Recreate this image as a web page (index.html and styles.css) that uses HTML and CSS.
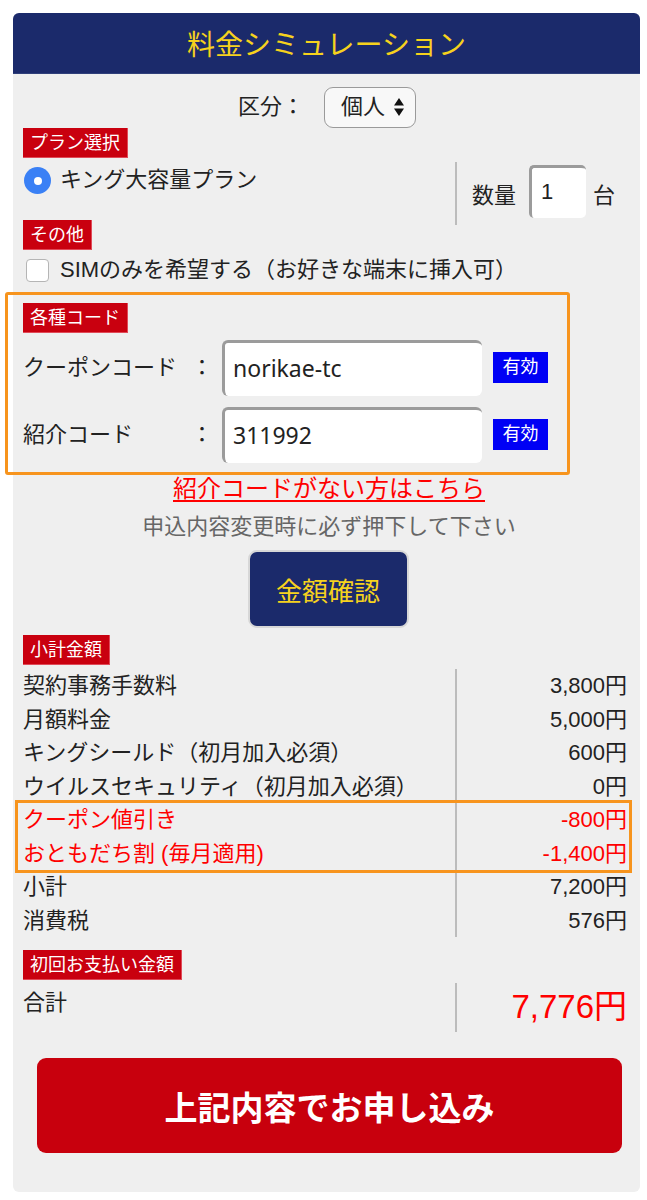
FILE: index.html
```html
<!DOCTYPE html>
<html lang="ja">
<head>
<meta charset="utf-8">
<title>料金シミュレーション</title>
<link rel="stylesheet" href="styles.css">
</head>
<body>
<div class="card">
  <div class="head">料金シミュレーション</div>
  <div class="body">
    <div class="kubun">
      <span class="kubun-label">区分：</span>
      <div class="select">
        <span>個人</span>
        <svg class="arrows" width="12" height="20" viewBox="0 0 12 20"><path d="M6 1 L11 8.5 L1 8.5 Z M6 19 L11 11.5 L1 11.5 Z" fill="#111"/></svg>
      </div>
    </div>

    <div class="tag tag-plan">プラン選択</div>
    <div class="plan">
      <div class="plan-left">
        <span class="radio"></span>
        <span>キング大容量プラン</span>
      </div>
      <div class="plan-right">
        <span>数量</span>
        <div class="qty">1</div>
        <span>台</span>
      </div>
    </div>

    <div class="tag">その他</div>
    <div class="check-row">
      <span class="check"></span>
      <span>SIMのみを希望する（お好きな端末に挿入可）</span>
    </div>

    <div class="codes">
      <div class="tag">各種コード</div>
      <div class="code-row first">
        <div class="code-label"><span>クーポンコード</span><span>：</span></div>
        <div class="code-input">norikae-tc</div>
        <div class="valid">有効</div>
      </div>
      <div class="code-row">
        <div class="code-label"><span>紹介コード</span><span>：</span></div>
        <div class="code-input">311992</div>
        <div class="valid">有効</div>
      </div>
    </div>

    <div class="link-row"><a class="link" href="#">紹介コードがない方はこちら</a></div>
    <div class="note">申込内容変更時に必ず押下して下さい</div>
    <div class="confirm-row"><div class="confirm">金額確認</div></div>

    <div class="tag tag-sub">小計金額</div>
    <div class="rows">
      <div class="row"><div class="rl">契約事務手数料</div><div class="rv">3,800円</div></div>
      <div class="row"><div class="rl">月額料金</div><div class="rv">5,000円</div></div>
      <div class="row"><div class="rl">キングシールド（初月加入必須）</div><div class="rv">600円</div></div>
      <div class="row"><div class="rl">ウイルスセキュリティ（初月加入必須）</div><div class="rv">0円</div></div>
      <div class="hl">
        <div class="row red"><div class="rl">クーポン値引き</div><div class="rv">-800円</div></div>
        <div class="row red"><div class="rl">おともだち割 (毎月適用)</div><div class="rv">-1,400円</div></div>
      </div>
      <div class="row"><div class="rl">小計</div><div class="rv">7,200円</div></div>
      <div class="row"><div class="rl">消費税</div><div class="rv">576円</div></div>
    </div>

    <div class="tag tag-total">初回お支払い金額</div>
    <div class="total">
      <div class="tl">合計</div>
      <div class="tv">7,776円</div>
    </div>

    <div class="apply">上記内容でお申し込み</div>
  </div>
</div>
</body>
</html>
```

FILE: styles.css
```css
* { box-sizing: border-box; }
html, body { margin: 0; padding: 0; background: #fff; }
body {
  font-family: "Liberation Sans", "Noto Sans CJK JP", sans-serif;
  font-size: 22px;
  color: #222;
}
.card {
  margin: 13px 7px 8px 13px;
  width: 627px;
  background: #efefef;
  border-radius: 6px;
  padding-bottom: 39px;
}
.head {
  height: 61px;
  background: #1b2a6b;
  border-radius: 6px 6px 0 0;
  color: #f6d21d;
  font-size: 28px;
  display: flex;
  align-items: center;
  justify-content: center;
  border-bottom: 1px solid #2f3f7a;
}
.body { padding: 0 13px 0 10px; }

.kubun {
  margin-top: 13px;
  display: flex;
  justify-content: center;
  align-items: center;
  gap: 20px;
  height: 40px;
  padding-left: 4px;
}
.kubun-label { line-height: 30px; }
.select {
  width: 92px;
  height: 41px;
  border: 1px solid #9a9a9a;
  border-radius: 9px;
  background: #f8f8f8;
  display: flex;
  align-items: center;
  padding-left: 16px;
  gap: 8px;
  line-height: 30px;
}
.arrows { display: block; }

.tag {
  display: inline-block;
  background: #c9000f;
  color: #fff;
  font-size: 18px;
  line-height: 30px;
  height: 30px;
  padding: 0 7px;
  border-right: 1px solid #e04a58;
  border-bottom: 1px solid #e04a58;
}
.tag-plan { margin-top: 1px; }

.plan {
  display: flex;
  height: 62px;
}
.plan-left {
  flex: 0 0 432px;
  display: flex;
  align-items: flex-start;
  padding-top: 7px;
  padding-left: 1px;
  gap: 9px;
  line-height: 30px;
}
.radio {
  flex: none;
  width: 27px;
  height: 27px;
  margin-top: 2px;
  border-radius: 50%;
  background: #3a80f5;
  display: flex;
  align-items: center;
  justify-content: center;
}
.radio::after {
  content: "";
  width: 8px;
  height: 8px;
  border-radius: 50%;
  background: #fff;
}
.plan-right {
  flex: 1;
  margin-top: 4px;
  margin-bottom: -5px;
  border-left: 2px solid #bcbcbc;
  display: flex;
  align-items: center;
  padding-left: 15px;
  line-height: 30px;
  position: relative;
}
.plan-right > span:first-child { margin-right: 13px; margin-top: 4px; }
.plan-right > span:last-child { margin-left: 7px; margin-top: 4px; }
.qty {
  width: 57px;
  height: 53px;
  background: #fff;
  border-top: 3px solid #9b9b9b;
  border-left: 3px solid #9b9b9b;
  border-radius: 5px;
  padding-left: 9px;
  line-height: 48px;
  margin-top: -4px;
}

.check-row {
  display: flex;
  align-items: flex-start;
  padding-top: 5px;
  padding-left: 3px;
  gap: 11px;
  line-height: 30px;
  height: 42px;
}
.check {
  flex: none;
  width: 23px;
  height: 23px;
  margin-top: 4px;
  background: #fff;
  border: 1px solid #b5b5b5;
  border-radius: 4px;
}

.codes {
  margin-left: -18px;
  width: 565px;
  height: 183px;
  border: 3px solid #f7941d;
  border-radius: 3px;
  padding: 8px 0 0 15px;
}
.code-row {
  display: flex;
  align-items: center;
  margin-top: 11px;
}
.code-row.first { margin-top: 7px; }
.code-label {
  width: 190px;
  display: flex;
  justify-content: space-between;
  line-height: 30px;
}
.code-input {
  margin-left: 9px;
  width: 260px;
  height: 56px;
  background: #fff;
  border-top: 3px solid #9b9b9b;
  border-left: 3px solid #9b9b9b;
  border-radius: 6px;
  padding-left: 8px;
  font-size: 23px;
  line-height: 51px;
  font-family: "Noto Sans", "Liberation Sans", sans-serif;
}
.valid {
  margin-left: 11px;
  width: 55px;
  height: 31px;
  background: #0000f5;
  color: #fff;
  font-size: 18px;
  line-height: 31px;
  text-align: center;
  margin-top: -2px;
}

.link-row {
  text-align: center;
  line-height: 28px;
  height: 28px;
  padding-left: 8px;
}
.link {
  color: #ff0000;
  font-size: 24px;
  text-decoration: underline;
  text-underline-offset: 3px;
}
.note {
  margin-top: 9px;
  text-align: center;
  color: #666;
  line-height: 30px;
  padding-left: 8px;
}
.confirm-row {
  margin-top: 8px;
  display: flex;
  justify-content: center;
  padding-left: 6px;
}
.confirm {
  width: 161px;
  height: 78px;
  background: #1b2a6b;
  border: 2px solid #d7d7d7;
  border-radius: 9px;
  color: #f6d21d;
  font-size: 26px;
  display: flex;
  align-items: center;
  justify-content: center;
}
.tag-sub { margin-top: 7px; }

.rows { margin-top: 4px; }
.row {
  display: flex;
  line-height: 33.5px;
  height: 33.5px;
}
.rl { flex: 0 0 432px; white-space: nowrap; }
.rv {
  flex: 1;
  border-left: 2px solid #bcbcbc;
  text-align: right;
}
.row.red { color: #ff0000; }
.hl {
  outline: 3px solid #f7941d;
  margin-left: -5px;
  padding-left: 5px;
  margin-right: -2px;
  padding-right: 2px;
}
.hl .rv { margin-right: -2px; padding-right: 2px; }

.tag-total { margin-top: 13px; }
.total {
  margin-top: 3px;
  display: flex;
  height: 49px;
}
.tl { flex: 0 0 432px; line-height: 40px; }
.tv {
  flex: 1;
  border-left: 2px solid #bcbcbc;
  text-align: right;
  color: #ff0000;
  font-size: 33px;
  line-height: 48px;
}

.apply {
  margin: 26px 5px 0 14px;
  height: 95px;
  background: #c8000d;
  border-radius: 9px;
  color: #fff;
  font-size: 33px;
  font-weight: bold;
  display: flex;
  align-items: center;
  justify-content: center;
}
```
